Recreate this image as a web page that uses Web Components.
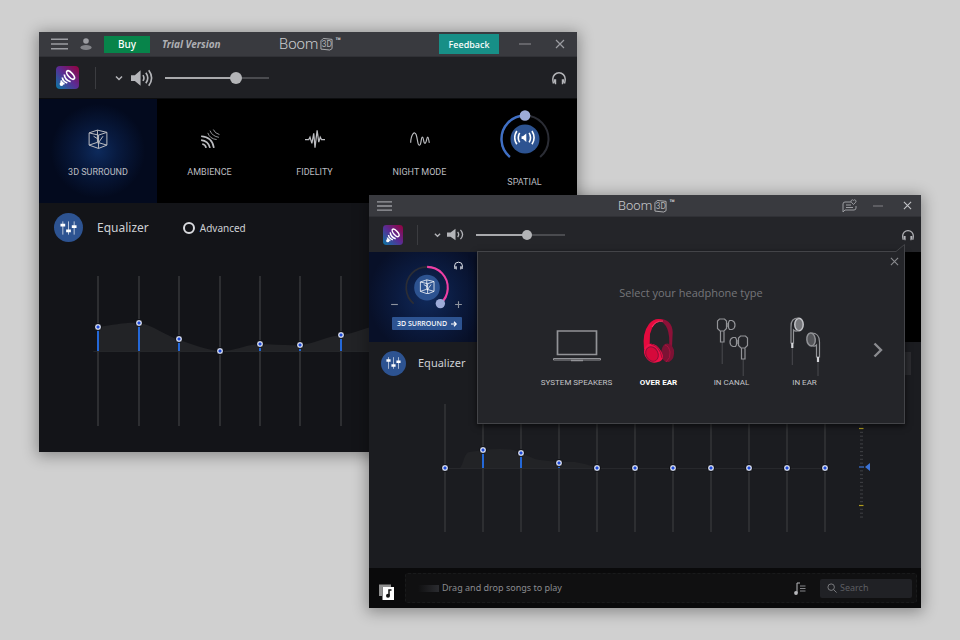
<!DOCTYPE html>
<html lang="en">
<head>
<meta charset="utf-8">
<meta name="viewport" content="width=device-width, initial-scale=1">
<title>Boom 3D</title>
<style>
	body {
		margin: 0;
		background: #d0d0d0;
		font-family: "Noto Sans", "Open Sans", sans-serif;
		font-size: 11px;
		color: #c8c9cc;
	}
</style>
</head>
<body>
<boom-desktop></boom-desktop>

<script>
/** Icon drawings, all stroked or filled with the current colour. */
const ICONS = {
	menu: ["0 0 18 12",`<path d="M0 1h18M0 6h18M0 11h18" stroke-width="1.6"/>`],
	person: ["0 0 12 12",`<g fill="currentColor" stroke="none"><circle cx="6" cy="3" r="2.8"/><ellipse cx="6" cy="9.4" rx="5.6" ry="2.5" opacity=".75"/></g>`],
	minimise: ["0 0 12 12",`<path d="M0 6h12" stroke-width="1.4"/>`],
	close: ["0 0 10 10",`<path d="M1 1l8 8M9 1l-8 8" stroke-width="1.2"/>`],
	message: ["0 0 15 14",`<path d="M9 3H3Q1 3 1 5v8l2-2h9q2 0 2-2V7M4 6h5M4 8.500h7"/><path d="M11.500 5.500L9.300 3.200a1.300 1.300 0 0 1 2.200-1.800a1.300 1.300 0 0 1 2.200 1.800z"/>`],
	down: ["0 0 8 6",`<path d="M1 1.500l3 3 3-3" stroke-width="1.500"/>`],
	speaker: ["0 0 24 18",`<path d="M0 6h4l6-5v16l-6-5H0z" fill="currentColor" stroke="none"/><path d="M12.500 6q2 3 0 6M15.500 3.500q4 5.500 0 11M18.500 1q6 8 0 16" stroke-width="1.700"/>`],
	"speaker-mid": ["0 0 24 18",`<path d="M0 6h5l7-5v16l-7-5H0z" fill="currentColor" stroke="none"/><path d="M15 5.500q3 3.500 0 7M19 2.500q6 6.500 0 13" stroke-width="1.800"/>`],
	headphones: ["0 0 14 14",`<path d="M1.500 12.500Q.8 10.500.8 8a6.200 6.200 0 0 1 12.400 0q0 2.500-.7 4.500" stroke-width="1.500"/><path d="M2 8.300h2.200v4.900H3q-1.500-2-1-4.900zM12 8.300H9.800v4.900H11q1.500-2 1-4.900z" fill="currentColor" stroke="none"/>`],
	cube: ["0 0 18 18",`<path d="M1 3.500L8.500 1 17 3v11.500l-7.500 3-8.500-3zM1 3.500L9.500 5.500 17 3M9.500 5.500v12M8.500 1v11L1 14.500M8.500 12l8.500 2.500M5 6.500l4 2.500M9 13l4.500-6.500" stroke-width=".9"/>`],
	ambience: ["0 0 18 18",`<g stroke-width="1.500"><path d="M1 6.500q10 .5 11.500 10.500M1 10q6.500.5 8 7M2 13.500q3 .5 3.500 3.500"/></g><path d="M7 3.500q2 5.500 8 6M9 1.500q2 5 8 6M12 .500q1.500 3.500 5.500 4.500" stroke-width=".7"/>`],
	fidelity: ["0 0 16 16",`<path d="M0 8.500h3l1-2 1.500 5L7 3.500 8 15 9.700 1l1.300 9.500 1.200-4 1 2H16"/>`],
	night: ["0 0 21 16",`<path d="M.7 12C1 3 5-1 6.500 3.500S8 15 10 14.500 11.500 6 13 6s1 6.500 2.700 6.500S17.500 6 18.500 6 19.500 9 20.300 12" stroke-width="1.200"/>`],
	spatial: ["0 0 22 16",`<path d="M8 6.500h1.500L13 3.500v9L9.500 9.500H8z" fill="currentColor" stroke="none"/><path d="M6 3q-3 5 0 10M3 1q-4.500 7 0 14M16 3q3 5 0 10M19 1q4.500 7 0 14" stroke-width="1.700"/>`],
	faders: ["0 0 18 16",`<path d="M3 1v14M9 1v14M15 1v14" stroke-width="1" opacity=".7"/><path d="M.5 3.500h5v3h-5zM6.500 9.500h5v3h-5zM12.500 5h5v3h-5z" fill="currentColor" stroke="none"/>`],
	minus: ["0 0 8 8",`<path d="M1 4h6"/>`],
	plus: ["0 0 8 8",`<path d="M1 4h6M4 1v6"/>`],
	arrow: ["0 0 8 8",`<path d="M0 4h6M4 1l3 3-3 3" stroke-width="1.600"/>`],
	next: ["0 0 10 16",`<path d="M1.500 1.500L8 8l-6.500 6.500" stroke-width="2.400"/>`],
	search: ["0 0 12 12",`<circle cx="5" cy="5" r="3.900"/><path d="M8 8l3.500 3.500"/>`],
	songs: ["0 0 16 16",`<path d="M0 12V.5h12V3H3v9z" fill="currentColor" stroke="none" opacity=".55"/><path d="M3.500 3H15v13H3.500z" fill="currentColor" stroke="none"/><path d="M10 11.500V6h2.500" stroke="#111" stroke-width="1.500"/><circle cx="9" cy="11.700" r="2" fill="#111" stroke="none"/>`],
	playlist: ["0 0 12 13",`<path d="M3 11V1h3"/><circle cx="2" cy="11" r="1.900" fill="currentColor" stroke="none"/><path d="M6 4h5.500M6 6.500h5.500M6 9h5.500" opacity=".7"/>`],
	laptop: ["0 0 48 61",`<path d="M4.500 15h39v23.500h-39z" stroke-width="1.700"/><path d="M.5 42.500h47v1.500h-47z"/><path d="M18 44.500h12" stroke-width="1.500"/>`],
	overear: ["0 0 32 61",`<g stroke="none"><path d="M17 3C26 3 31 10 29.500 20L29 32 26 31Q28 8 15 4z" fill="#8d1138"/><path d="M22 28q6-2 9 6 1 9-5 12-6 1-8-7 0-8 4-11z" fill="#7d1234"/><path d="M22 29q4 1 5 7t-4 10" fill="none" stroke="#a9123f"/><path d="M1 33Q-1 17 6 8 12 1 20 4 10 5 7 18l-.5 15z" fill="#e40a3e"/><path d="M5 28q8-2 13 7 5 9-3 11-8 3-13-6Q-1 33 5 28z" fill="#f01049"/><ellipse cx="9" cy="38" rx="6" ry="7.500" transform="rotate(-28 9 38)" fill="#d6093b"/></g><ellipse cx="9" cy="38" rx="6" ry="7.500" transform="rotate(-28 9 38)" stroke="#8d1138"/><path d="M8 28q9 2 11 14" stroke="#9b0d35"/><path d="M9 11Q12 5 20 5" stroke="#ff3a68"/>`],
	canal: ["0 0 33 61",`<g stroke-width="1.200"><path d="M4 3h5l2 2v7.500l-2.500 2.500H4.500L2 12.500V5zM12.500 7v4M14 4.500h2.500q3 1 3 4.500t-3 4.500H14l-1-2v-5zM5 15h3.500v11H5z"/><path d="M25 20h5l2 2v7.500L29.500 32h-4L23 29.500V22zM21.500 24v4M20 21.500h-2.500q-3 1-3 4.500t3 4.500H20l1-2v-5zM26 32h3.500v11H26z"/></g><path d="M6.700 26v22M27.700 43v17" opacity=".35"/>`],
	inear: ["0 0 33 61",`<ellipse cx="10.500" cy="8.500" rx="4.200" ry="6.300" fill="#77787c" stroke="#c3c4c8" stroke-width="1.500"/><path d="M10 2Q2 2 2.500 11v16h2.500V14q2 2 5 .5" stroke-width="1.200"/><ellipse cx="22.500" cy="23.500" rx="4.200" ry="6.500" transform="rotate(-5 22 23)" fill="#55565a" stroke-width="1.500"/><path d="M23 17q8 0 8 9v15h-3V29q-2 2-5 .5" stroke-width="1.200"/><path d="M3.800 27v5M29.500 41v5" stroke="#d5d6da" stroke-width="2.200"/><path d="M3.800 32v17M29.500 46v14" opacity=".35"/>`]
};

class BoomIcon extends HTMLElement {
	constructor(){
		super();
		this.attachShadow({mode:"open"});
	}
	connectedCallback(){
		const [box,shapes] = ICONS[this.getAttribute("name")];
		this.shadowRoot.innerHTML = /*html*/`
			<style>
				:host { display: inline-flex; flex: none; width: 16px; height: 16px; }
				svg { width: 100%; height: 100%; fill: none; stroke: currentColor; }
			</style>
			<svg viewBox="${box}" aria-hidden="true">${shapes}</svg>
		`;
	}
}
customElements.define("boom-icon",BoomIcon);

class BoomLogo extends HTMLElement {
	constructor(){
		super();
		this.attachShadow({mode:"open"});
		this.shadowRoot.innerHTML = /*html*/`
			<style>
				:host {
					display: flex;
					align-items: center;
					gap: 2px;
					font: 300 var(--logo-size, 15px)/20px Roboto, sans-serif;
					color: #c9cace;
				}
				svg { width: 13px; height: 14px; fill: none; stroke: #b2b3b7; }
				text { font: 9px Roboto, sans-serif; fill: #b2b3b7; stroke: none; }
				sup { font-size: 9px; line-height: 9px; align-self: flex-start; margin-top: 3px; font-weight: 700; }
			</style>
			<span>Boom</span>
			<svg viewBox="0 0 14 14"><path d="M1 3.500L3.500 1 13 2v10l-2.500 1.500-9.500-1z"/><text x="2" y="10">3D</text></svg>
			<sup>™</sup>
		`;
	}
}
customElements.define("boom-logo",BoomLogo);

class AppBadge extends HTMLElement {
	constructor(){
		super();
		this.attachShadow({mode:"open"});
		this.shadowRoot.innerHTML = /*html*/`
			<style>
				:host { display: block; flex: none; width: 23px; height: 23px; }
				svg { display: block; width: 100%; height: 100%; }
			</style>
			<svg viewBox="0 0 23 23" aria-hidden="true">
				<defs>
					<linearGradient id="fill" x1="0" y1="1" x2="1" y2="0">
						<stop offset="0" stop-color="#087ba6"/>
						<stop offset=".5" stop-color="#5a2c94"/>
						<stop offset="1" stop-color="#96003c"/>
					</linearGradient>
				</defs>
				<rect width="23" height="23" rx="4" fill="url(#fill)"/>
				<g fill="none" stroke="#fff" stroke-width="1.700">
					<ellipse cx="14.500" cy="9" rx="2.300" ry="5.300" transform="rotate(-42 14.500 9)"/>
					<path d="M8.300 8.500q.5 5.500 6.300 7.300M6.300 11.500q.5 4 5 5.500M5 14.500q.5 2.500 3.500 3.500"/>
				</g>
				<circle cx="5.500" cy="18" r="1.900" fill="#fff"/>
			</svg>
		`;
	}
}
customElements.define("app-badge",AppBadge);

/** Window frame: title bar with a slot on each side, then the content. */
class BoomWindow extends HTMLElement {
	constructor(){
		super();
		this.attachShadow({mode:"open"});
		this.shadowRoot.innerHTML = /*html*/`
			<style>
				:host {
					display: flex;
					flex-direction: column;
					position: relative;
					background: #131418;
					box-shadow: 0 2px 14px 2px #00000055;
				}
				header {
					display: grid;
					grid-template-columns: 1fr auto 1fr;
					align-items: center;
					height: 24px;
					padding: 0 8px 0 12px;
					background: #393a3f;
					border-bottom: 1px solid #303136;
				}
				.side { display: flex; align-items: center; gap: 12px; }
				.end { justify-content: flex-end; gap: 20px; }
				:host([compact]) { background: #1b1c20; --logo-size: 13px; }
				:host([compact]) header { height: 21px; padding: 0 5px 0 8px; }
				:host([compact]) .end { gap: 16px; }
			</style>
			<header>
				<div class="side"><slot name="start"></slot></div>
				<boom-logo></boom-logo>
				<div class="side end"><slot name="end"></slot></div>
			</header>
			<slot></slot>
		`;
	}
}
customElements.define("boom-window",BoomWindow);

class VolumeBar extends HTMLElement {
	constructor(){
		super();
		this.attachShadow({mode:"open"});
	}
	connectedCallback(){
		const level = this.getAttribute("level");
		const icon = this.hasAttribute("compact") ? "speaker-mid" : "speaker";
		this.shadowRoot.innerHTML = /*html*/`
			<style>
				:host {
					display: flex;
					align-items: center;
					height: 41px;
					padding: 0 11px 0 17px;
					background: #1f2024;
					color: #b4b5b9;
				}
				button { display: flex; padding: 0; border: 0; background: none; color: inherit; }
				hr { width: 1px; height: 22px; margin: 0 19px 0 16px; border: 0; background: #3b3c40; }
				.down { width: 8px; height: 6px; margin-right: 8px; }
				.speaker { width: 23px; height: 18px; margin-right: 11px; }
				.phones { width: 14px; height: 14px; }
				.output { margin-left: auto; }
				input {
					appearance: none;
					width: 104px;
					height: 12px;
					margin: 0;
					background: linear-gradient(to right, #a9aaad ${level}%, #4a4b4f 0) center / 100% 2px no-repeat;
				}
				input::-webkit-slider-thumb { appearance: none; width: 12px; height: 12px; border-radius: 50%; background: #b3b4b7; }
				:host([compact]) { height: 35px; padding: 0 7px 0 14px; background: #242529; }
				:host([compact]) app-badge { width: 20px; height: 20px; }
				:host([compact]) hr { height: 20px; margin: 0 16px 0 14px; }
				:host([compact]) .down { width: 7px; margin-right: 6px; }
				:host([compact]) .speaker { width: 17px; height: 13px; margin-right: 12px; }
				:host([compact]) .phones { width: 12px; height: 12px; }
				:host([compact]) input { width: 89px; height: 10px; }
				:host([compact]) input::-webkit-slider-thumb { width: 10px; height: 10px; }
			</style>
			<app-badge></app-badge>
			<hr>
			<button aria-label="Volume options"><boom-icon class="down" name="down"></boom-icon></button>
			<button aria-label="Mute"><boom-icon class="speaker" name="${icon}"></boom-icon></button>
			<input type="range" min="0" max="100" value="${level}" aria-label="Volume">
			<button class="output" aria-label="Output device"><boom-icon class="phones" name="headphones"></boom-icon></button>
		`;
	}
}
customElements.define("volume-bar",VolumeBar);

/** Round knob. The coloured part of the ring runs between two percentages of the sweep. */
class SoundDial extends HTMLElement {
	constructor(){
		super();
		this.attachShadow({mode:"open"});
	}
	connectedCallback(){
		const from = Number(this.getAttribute("from"));
		const to = Number(this.getAttribute("to"));
		const angle = (-140+280*to/100)*Math.PI/180;
		const ring = "M10.900 48a23.500 23.500 0 1 1 30.200 0";
		this.shadowRoot.innerHTML = /*html*/`
			<style>
				:host { display: grid; place-items: center; width: 52px; height: 54px; color: #fff; }
				svg, boom-icon { grid-area: 1 / 1; }
				svg { width: 100%; height: 100%; fill: none; }
				boom-icon { width: 40%; height: 32%; margin-top: 6%; }
			</style>
			<svg viewBox="0 0 52 54" aria-hidden="true">
				<path d="${ring}" stroke="#2b2d35" stroke-width="2"/>
				<path d="${ring}" stroke="${this.getAttribute("color")}" stroke-width="2.400" pathLength="100" stroke-dasharray="0 ${from} ${to-from} 200"/>
				<circle cx="26" cy="30" r="14.500" fill="#2d5391"/>
				<circle cx="${26+23.5*Math.sin(angle)}" cy="${30-23.5*Math.cos(angle)}" r="5.300" fill="#9dabd8"/>
			</svg>
			<boom-icon name="${this.getAttribute("icon")}"></boom-icon>
		`;
	}
}
customElements.define("sound-dial",SoundDial);

/** One effect of the strip: art in its own slot, then the label. */
class EffectTab extends HTMLElement {
	constructor(){
		super();
		this.attachShadow({mode:"open"});
		this.shadowRoot.innerHTML = /*html*/`
			<style>
				:host { display: block; background: #000; }
				:host([active]) { background: radial-gradient(circle at 50% 50%, #0d2a5c 0, #081a3f 25%, #030a1e 60%); }
				button {
					display: flex;
					flex-direction: column;
					align-items: center;
					gap: 17px;
					width: 100%;
					height: 104px;
					padding: 30px 0 0;
					border: 0;
					background: none;
					font: 9px/12px Roboto, sans-serif;
					color: #bcbdc1;
				}
				::slotted(boom-icon) { width: 20px; height: 20px; }
				:host([dial]) button { padding-top: 10px; gap: 13px; }
			</style>
			<button>
				<slot name="art"></slot>
				<slot></slot>
			</button>
		`;
	}
}
customElements.define("effect-tab",EffectTab);

class SurroundCard extends HTMLElement {
	constructor(){
		super();
		this.attachShadow({mode:"open"});
		this.shadowRoot.innerHTML = /*html*/`
			<style>
				:host {
					display: flex;
					flex-direction: column;
					align-items: center;
					gap: 8px;
					width: 116px;
					height: 90px;
					padding-top: 9px;
					box-sizing: border-box;
					background: radial-gradient(circle at 50% 50%, #10295a 0, #0b1b40 40%, #081028 80%);
				}
				.row { display: grid; grid-template-columns: 10px 46px 10px; gap: 4px; }
				.side { display: flex; flex-direction: column; justify-content: space-between; }
				.side.low { justify-content: flex-end; }
				sound-dial { width: 46px; height: 48px; }
				.side boom-icon { width: 9px; height: 9px; color: #8f949f; }
				.side .phones { color: #e6e8ee; }
				button { display: flex; padding: 0; border: 0; background: none; color: inherit; }
				.open {
					align-items: center;
					justify-content: center;
					gap: 4px;
					width: 70px;
					height: 13px;
					border-radius: 1px;
					background: #2d5391;
					font: 500 7px/13px "Noto Sans", sans-serif;
					color: #fff;
				}
				.open boom-icon { width: 6px; height: 6px; }
			</style>
			<div class="row">
				<div class="side low"><button aria-label="Less"><boom-icon name="minus"></boom-icon></button></div>
				<sound-dial icon="cube" from="50" to="100" color="#ee3fa6"></sound-dial>
				<div class="side"><boom-icon class="phones" name="headphones"></boom-icon><button aria-label="More"><boom-icon name="plus"></boom-icon></button></div>
			</div>
			<button class="open">3D SURROUND <boom-icon name="arrow"></boom-icon></button>
		`;
	}
}
customElements.define("surround-card",SurroundCard);

class EqHeader extends HTMLElement {
	constructor(){
		super();
		this.attachShadow({mode:"open"});
		this.shadowRoot.innerHTML = /*html*/`
			<style>
				:host { display: flex; align-items: center; height: 49px; padding: 0 10px 0 15px; }
				.badge {
					display: grid;
					place-items: center;
					width: 29px;
					height: 29px;
					border-radius: 50%;
					background: #2d5391;
					color: #fff;
				}
				.badge boom-icon { width: 17px; height: 16px; }
				h2 { margin: 0 34px 0 14px; font-size: 12px; line-height: 16px; font-weight: 400; color: #ced0d4; }
				:host([compact]) { height: 42px; padding-left: 12px; }
				:host([compact]) .badge { width: 25px; height: 25px; }
				:host([compact]) .badge boom-icon { width: 15px; height: 14px; }
				:host([compact]) h2 { margin-left: 12px; font-size: 11px; }
			</style>
			<span class="badge"><boom-icon name="faders"></boom-icon></span>
			<h2>Equalizer</h2>
			<slot></slot>
		`;
	}
}
customElements.define("eq-header",EqHeader);

class EqChart extends HTMLElement {
	constructor(){
		super();
		this.attachShadow({mode:"open"});
	}
	connectedCallback(){
		const values = this.getAttribute("values").split(" ").map(Number);
		const height = Number(this.getAttribute("height"));
		const mid = height/2;
		// one step of a slider is one pixel: the thumb is 8px high
		const limit = mid-4;
		this.shadowRoot.innerHTML = /*html*/`
			<style>
				:host { display: grid; }
				svg, .bands { grid-area: 1 / 1; }
				svg { width: 100%; height: ${height}px; }
				.bands { display: grid; grid-template-columns: repeat(${values.length}, 1fr); justify-items: center; }
				input {
					appearance: none;
					writing-mode: vertical-lr;
					direction: rtl;
					width: 8px;
					height: ${height}px;
					margin: 0;
					background: linear-gradient(#2d2e31 calc(50% - var(--gain)), #2468d8 0 50%, #2d2e31 0) center / 2px 100% no-repeat;
				}
				input::-webkit-slider-thumb {
					appearance: none;
					box-sizing: border-box;
					width: 8px;
					height: 8px;
					border: 1px solid #111216;
					border-radius: 50%;
					background: radial-gradient(circle, #1c49d8 1px, #d5dbee 2px);
				}
			</style>
			<svg viewBox="0 0 ${values.length*100} ${height}" preserveAspectRatio="none" aria-hidden="true">
				<path d="${this.getAttribute("curve")}" fill="#222326"/>
				<path d="M38 ${mid+.5}H${values.length*100-50}" stroke="#2d2e31"/>
			</svg>
			<div class="bands">
				${values.map((value,i)=>`<input type="range" min="${-limit}" max="${limit}" value="${value}" style="--gain:${value}px" aria-label="Band ${i+1}">`).join("")}
			</div>
		`;
	}
}
customElements.define("eq-chart",EqChart);

class GainMeter extends HTMLElement {
	constructor(){
		super();
		this.attachShadow({mode:"open"});
		let ticks = "";
		for(let i=-13;i<=13;i++){
			const color = i===0 ? "#3c73d6" : Math.abs(i)===10 ? "#b09c1e" : "#3a3b3f";
			const inset = i===0 || Math.abs(i)===10 ? 1 : 2;
			ticks += `<path d="M${inset} ${63+3.85*i}H${i===0 ? 6 : 6-inset/2}" stroke="${color}" stroke-width="1.200"/>`;
		}
		this.shadowRoot.innerHTML = /*html*/`
			<style>
				:host { display: flex; gap: 1px; }
				svg { width: 6px; height: 126px; }
				input { appearance: none; writing-mode: vertical-lr; direction: rtl; width: 5px; height: 126px; margin: 0; background: none; }
				input::-webkit-slider-thumb { appearance: none; width: 5px; height: 8px; background: #3c73d6; clip-path: polygon(0 50%, 100% 0, 100% 100%); }
			</style>
			<svg viewBox="0 0 6 126" aria-hidden="true">${ticks}</svg>
			<input type="range" min="-13" max="13" value="0" aria-label="Gain">
		`;
	}
}
customElements.define("gain-meter",GainMeter);

class HeadphonePicker extends HTMLElement {
	constructor(){
		super();
		this.attachShadow({mode:"open"});
		this.shadowRoot.innerHTML = /*html*/`
			<style>
				:host {
					display: block;
					box-sizing: border-box;
					height: 173px;
					border: 1px solid #434448;
					background: #242529;
					box-shadow: 0 2px 6px #000000aa;
				}
				.pointer { position: absolute; right: -1px; top: -8px; width: 9px; height: 9px; }
				.close { position: absolute; right: 5px; top: 5px; }
				.close boom-icon { width: 9px; height: 9px; }
				button { display: flex; padding: 0; border: 0; background: none; color: #8a8b8f; }
				h3 { margin: 31px 0 13px; text-align: center; font: 400 11px/20px "Open Sans", sans-serif; color: #75767a; }
				.types { display: grid; grid-template-columns: 91px repeat(3, 73px) 1fr; padding-left: 53px; }
				.type {
					flex-direction: column;
					align-items: center;
					font: 8px/12px Roboto, sans-serif;
					color: #c3c4c8;
				}
				.type boom-icon { width: 48px; height: 61px; color: #929397; }
				.type[aria-pressed="true"] { font-weight: 700; color: #fff; }
				.next { justify-self: end; align-self: start; margin: 26px 18px 0 0; }
			</style>
			<svg class="pointer" viewBox="0 0 9 9" aria-hidden="true"><path d="M0 9V7.500L8.500.5V9z" fill="#242529"/><path d="M0 7.500L8.500.5V9" fill="none" stroke="#434448"/></svg>
			<button class="close" aria-label="Close"><boom-icon name="close"></boom-icon></button>
			<h3>Select your headphone type</h3>
			<div class="types">
				<button class="type"><boom-icon name="laptop"></boom-icon>SYSTEM SPEAKERS</button>
				<button class="type" aria-pressed="true"><boom-icon name="overear"></boom-icon>OVER EAR</button>
				<button class="type"><boom-icon name="canal"></boom-icon>IN CANAL</button>
				<button class="type"><boom-icon name="inear"></boom-icon>IN EAR</button>
				<button class="next" aria-label="More types"><boom-icon name="next"></boom-icon></button>
			</div>
		`;
	}
}
customElements.define("headphone-picker",HeadphonePicker);

class SongBar extends HTMLElement {
	constructor(){
		super();
		this.attachShadow({mode:"open"});
		this.shadowRoot.innerHTML = /*html*/`
			<style>
				:host { display: flex; align-items: center; gap: 10px; height: 40px; padding: 0 4px 0 10px; background: #0a0a0b; }
				button { display: flex; padding: 0; border: 0; background: none; color: #fff; }
				.library { margin-top: 8px; }
				.drop {
					display: flex;
					flex: 1;
					align-items: center;
					height: 30px;
					box-sizing: border-box;
					padding: 0 4px 0 12px;
					border: 1px dashed #191a1b;
					border-radius: 3px;
					background: #101011;
					font-size: 9px;
					line-height: 14px;
					color: #8a8b8f;
				}
				.fade { width: 21px; height: 7px; margin-right: 3px; background: linear-gradient(to right, #101011, #2b2c30); }
				.list { margin: 0 14px 0 auto; color: #b7b8bc; }
				.list boom-icon { width: 12px; height: 13px; }
				label { display: flex; align-items: center; gap: 3px; width: 92px; height: 19px; box-sizing: border-box; padding: 0 7px; border-radius: 2px; background: #202125; }
				label boom-icon { width: 10px; height: 10px; }
				input { flex: 1; min-width: 0; padding: 0; border: 0; background: none; outline: none; font: 9px/14px "Noto Sans", sans-serif; color: #b7b8bc; }
				input::placeholder { color: #5d5e62; }
			</style>
			<button class="library" aria-label="Library"><boom-icon name="songs"></boom-icon></button>
			<div class="drop">
				<span class="fade"></span>
				<span>Drag and drop songs to play</span>
				<button class="list" aria-label="Playlist"><boom-icon name="playlist"></boom-icon></button>
				<label><boom-icon name="search"></boom-icon><input type="text" placeholder="Search" aria-label="Search"></label>
			</div>
		`;
	}
}
customElements.define("song-bar",SongBar);

class BoomDesktop extends HTMLElement {
	constructor(){
		super();
		this.attachShadow({mode:"open"});
		this.shadowRoot.innerHTML = /*html*/`
			<style>
				:host {
					display: grid;
					grid-template-columns: minmax(0, 330fr) minmax(0, 208fr) minmax(0, 344fr);
					grid-template-rows: 163px auto;
					align-items: start;
					padding: 32px 39px;
				}
				.back { grid-area: 1 / 1 / 3 / 3; }
				.front { grid-area: 2 / 2 / 3 / 4; }
				button { display: flex; align-items: center; justify-content: center; padding: 0; border: 0; background: none; color: #9b9ca1; font: inherit; }
				.menu { width: 17px; height: 12px; }
				.person { width: 12px; height: 12px; color: #9b9ca1; }
				.minimise { width: 12px; height: 12px; color: #77787c; }
				.close { width: 10px; height: 10px; margin: 0 4px; }
				.buy { width: 46px; height: 17px; background: #07844a; color: #fff; font-size: 10px; line-height: 17px; font-weight: 500; }
				.trial { font-size: 10px; line-height: 16px; font-weight: 700; font-style: italic; color: #aeafb3; }
				.feedback { width: 60px; height: 20px; background: #178f87; color: #fff; font-size: 9px; font-weight: 500; }
				.front .menu { width: 15px; height: 10px; }
				.front .message { width: 15px; height: 14px; }
				.front .minimise { width: 10px; }
				.front .close { width: 9px; height: 9px; color: #c3c4c8; }
				.tabs { display: grid; grid-template-columns: 118px repeat(4, 1fr); border-top: 1px solid #0c0d0f; }
				.effects { background: #000; }
				.back eq-chart { margin: 24px 54px 26px 39px; }
				.advanced { display: flex; align-items: center; gap: 5px; font-size: 10px; line-height: 16px; color: #ced0d4; }
				.advanced input { appearance: none; width: 12px; height: 12px; margin: 0; border: 2px solid #d9dade; border-radius: 50%; box-sizing: border-box; }
				select { appearance: none; width: 100px; height: 23px; margin-left: auto; border: 0; background: #2a2b2f; }
				.plot { display: grid; grid-template-columns: 1fr 63px; column-gap: 14px; padding: 20px 0 36px 57px; }
				headphone-picker { position: absolute; left: 108px; right: 16px; top: 56px; }
			</style>
			<boom-window class="back">
				<button slot="start" aria-label="Menu"><boom-icon class="menu" name="menu"></boom-icon></button>
				<boom-icon slot="start" class="person" name="person"></boom-icon>
				<button slot="start" class="buy">Buy</button>
				<span slot="start" class="trial">Trial Version</span>
				<button slot="end" class="feedback">Feedback</button>
				<button slot="end" aria-label="Minimise"><boom-icon class="minimise" name="minimise"></boom-icon></button>
				<button slot="end" aria-label="Close"><boom-icon class="close" name="close"></boom-icon></button>
				<volume-bar level="71"></volume-bar>
				<nav class="tabs">
					<effect-tab active><boom-icon slot="art" name="cube"></boom-icon>3D SURROUND</effect-tab>
					<effect-tab><boom-icon slot="art" name="ambience"></boom-icon>AMBIENCE</effect-tab>
					<effect-tab><boom-icon slot="art" name="fidelity"></boom-icon>FIDELITY</effect-tab>
					<effect-tab><boom-icon slot="art" name="night"></boom-icon>NIGHT MODE</effect-tab>
					<effect-tab dial><sound-dial slot="art" icon="spatial" from="0" to="50" color="#3f6fc4"></sound-dial>SPATIAL</effect-tab>
				</nav>
				<eq-header>
					<label class="advanced"><input type="radio">Advanced</label>
				</eq-header>
				<eq-chart height="150" values="24 28 12 0 7 6 16 26 20 12 8"
					curve="M50 51C90 49 120 46 150 47S220 60 250 64 320 74 350 75 420 68 450 68 520 70 550 69 620 60 650 59 720 50 750 49 850 60 1050 67V75H50Z"></eq-chart>
			</boom-window>

			<boom-window class="front" compact>
				<button slot="start" aria-label="Menu"><boom-icon class="menu" name="menu"></boom-icon></button>
				<button slot="end" aria-label="Messages"><boom-icon class="message" name="message"></boom-icon></button>
				<button slot="end" aria-label="Minimise"><boom-icon class="minimise" name="minimise"></boom-icon></button>
				<button slot="end" aria-label="Close"><boom-icon class="close" name="close"></boom-icon></button>
				<volume-bar level="58" compact></volume-bar>
				<div class="effects"><surround-card></surround-card></div>
				<eq-header compact>
					<select aria-label="Preset"></select>
				</eq-header>
				<div class="plot">
					<eq-chart height="128" values="0 18 15 5 0 0 0 0 0 0 0"
						curve="M89 64C100 60 100 48 115 48L150 46Q200 44 230 46L250 49 287 55Q320 58 392 58 425 60 450 64Z"></eq-chart>
					<gain-meter></gain-meter>
				</div>
				<song-bar></song-bar>
				<headphone-picker></headphone-picker>
			</boom-window>
		`;
	}
}
customElements.define("boom-desktop",BoomDesktop);
</script>
</body>
</html>
